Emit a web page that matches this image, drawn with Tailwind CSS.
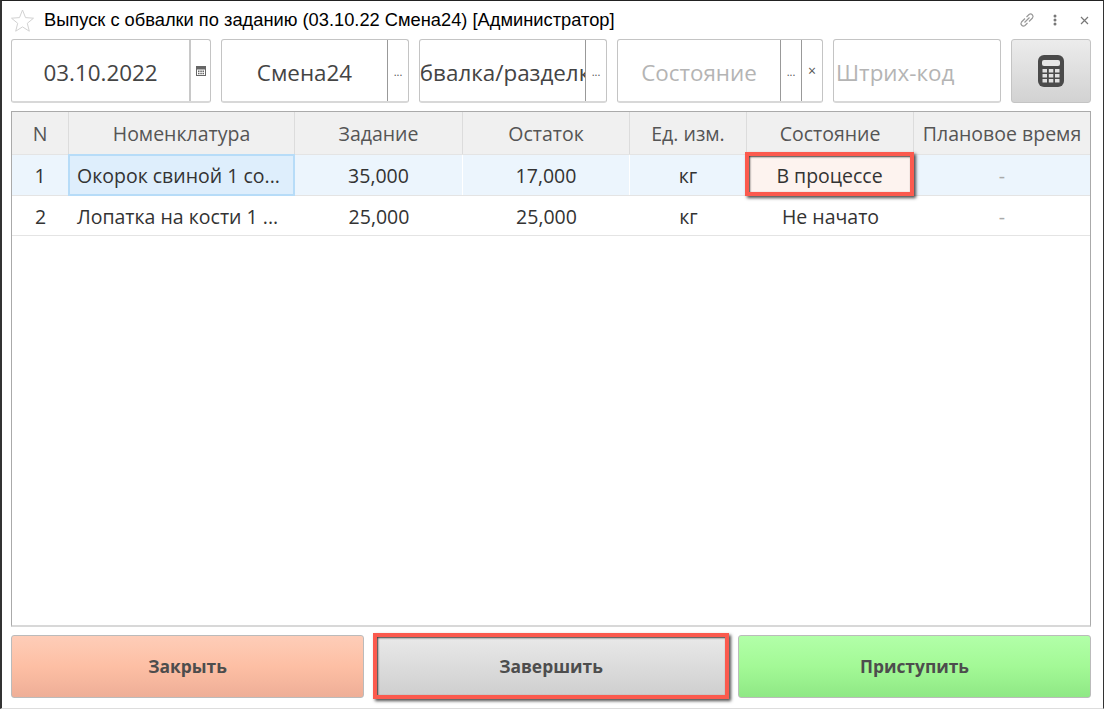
<!DOCTYPE html>
<html lang="ru">
<head>
  <meta charset="UTF-8" />
  <title>Выпуск с обвалки по заданию</title>
  <script src="https://cdn.jsdelivr.net/npm/@tailwindcss/browser@4"></script>
</head>
<body class="bg-white">
  <div class="w-[1104px] h-[709px] flex flex-col overflow-hidden bg-white border-l-2 border-t border-r border-b border-l-[#333] border-t-[#222] border-r-[#333] border-b-[#ddd] font-['Open_Sans',sans-serif] text-[#333]">

    <!-- Title -->
    <header class="h-[38px] shrink-0 flex items-center pl-[8px] pr-[14px]">
      <svg class="w-[25px] h-[25px] mr-[9px]" viewBox="0 0 25 25" fill="none" stroke="#d2d2d2" stroke-width="1"><path d="M12.5 2l3 7.6 8 .6-6.2 5.1 2 7.900-6.800-4.300-6.800 4.300 2-7.900L1.500 10.200l8-.6z"/></svg>
      <span class="font-['Liberation_Sans',sans-serif] text-[18.3px] text-black">Выпуск с обвалки по заданию (03.10.22 Смена24) [Администратор]</span>
      <div class="ml-auto flex items-center">
        <svg class="w-[16px] h-[16px]" viewBox="0 0 16 16" fill="none" stroke="#999" stroke-width="1.200"><path d="M5.500 10.500l5-5M6 6.500L2.500 10a2.500 2.500 0 0 0 3.500 3.500L8.500 11M10 9.500L13.500 6A2.500 2.500 0 0 0 10 2.500L7.500 5"/></svg>
        <svg class="w-[4px] h-[12px] ml-[18px]" viewBox="0 0 4 12" fill="#777"><circle cx="2" cy="2" r="1.500"/><circle cx="2" cy="6" r="1.500"/><circle cx="2" cy="10" r="1.500"/></svg>
        <svg class="w-[9px] h-[9px] ml-[23px]" viewBox="0 0 9 9" stroke="#777" stroke-width="1.200"><path d="M1 1l7 7M8 1l-7 7"/></svg>
      </div>
    </header>

    <!-- Filters -->
    <div class="h-[64px] shrink-0 flex gap-[10px] pl-[9px]">
      <div class="w-[200px] flex border border-[#c4c4c4] border-b-2 border-b-[#d8d8d8] rounded-[3px] text-[22.4px]">
        <div class="flex-1 flex items-center justify-center pt-[5px] text-[#444]">03.10.2022</div>
        <div class="w-[21px] flex items-center justify-center border-l-2 border-[#c8c8c8]">
          <svg class="w-[10px] h-[10px]" viewBox="0 0 10 10" fill="#666"><path d="M0 0h10v10H0z"/><path fill="#fff" d="M1 3.500h8V9H1z"/><path d="M2 4.500h1.500V6H2zM4.300 4.500h1.500V6H4.300zM6.500 4.500H8V6H6.500zM2 6.800h1.500v1.500H2zM4.300 6.800h1.500v1.500H4.300zM6.500 6.800H8v1.500H6.500z"/></svg>
        </div>
      </div>
      <div class="w-[188px] flex border border-[#c4c4c4] border-b-2 border-b-[#d8d8d8] rounded-[3px] text-[22.4px]">
        <div class="flex-1 flex items-center justify-center pt-[5px] text-[#444]">Смена24</div>
        <div class="w-[21px] flex items-center justify-center pt-[3px] border-l border-[#999] text-[11px] text-[#555]">...</div>
      </div>
      <div class="w-[188px] flex border border-[#c4c4c4] border-b-2 border-b-[#d8d8d8] rounded-[3px] text-[22.4px]">
        <div class="flex-1 min-w-0 overflow-hidden flex items-center justify-center whitespace-nowrap pt-[5px] pl-[4px] text-[#444]">обвалка/разделка</div>
        <div class="w-[21px] shrink-0 flex items-center justify-center pt-[3px] border-l border-[#999] text-[11px] text-[#555]">...</div>
      </div>
      <div class="w-[206px] flex border border-[#c4c4c4] border-b-2 border-b-[#d8d8d8] rounded-[3px] text-[22.4px]">
        <div class="flex-1 flex items-center justify-center pt-[5px] text-[#b4b4b4]">Состояние</div>
        <div class="w-[21px] flex items-center justify-center pt-[3px] border-l border-[#999] text-[11px] text-[#555]">...</div>
        <div class="w-[21px] flex items-center justify-center border-l border-[#999] text-[14px] text-[#555]">×</div>
      </div>
      <div class="w-[168px] flex items-center pl-[2px] pt-[5px] border border-[#c4c4c4] border-b-2 border-b-[#d8d8d8] rounded-[3px] text-[22.4px] text-[#b4b4b4]">Штрих-код</div>
      <button class="w-[80px] flex items-center justify-center border border-[#c4c4c4] rounded-[3px] bg-gradient-to-b from-[#ececec] to-[#d2d2d2]">
        <svg class="w-[26px] h-[32px]" viewBox="0 0 26 32"><rect width="26" height="32" rx="6" fill="#4a4a4a"/><rect x="4" y="5" width="18" height="6" rx="2" fill="#e6e6e6"/><path fill="#e0e0e0" d="M4.500 14h4.500v3.500H4.500zM10.800 14h4.500v3.500h-4.500zM17 14h4.500v3.500H17zM4.500 19h4.500v3.500H4.500zM10.800 19h4.500v3.500h-4.500zM17 19h4.500v3.500H17zM4.500 24h4.500v3.500H4.500zM10.800 24h4.500v3.500h-4.500zM17 24h4.500v3.500H17z"/></svg>
      </button>
    </div>

    <!-- Table -->
    <div class="ml-[9px] mt-[8px] w-[1080px] h-[516px] shrink-0 border border-[#aaa] border-b-2 border-b-[#d8d8d8] text-[19.5px]">
      <div class="grid grid-cols-[57px_226px_168px_167px_117px_167px_176px] h-[43px] bg-[#f0f0f0] border-b border-[#e4e4e4] text-[#555] text-center items-center">
        <div class="h-full flex items-center justify-center pt-[2px] border-r border-[#dcdcdc]">N</div>
        <div class="h-full flex items-center justify-center pt-[2px] border-r border-[#dcdcdc]">Номенклатура</div>
        <div class="h-full flex items-center justify-center pt-[2px] border-r border-[#dcdcdc]">Задание</div>
        <div class="h-full flex items-center justify-center pt-[2px] border-r border-[#dcdcdc]">Остаток</div>
        <div class="h-full flex items-center justify-center pt-[2px] border-r border-[#dcdcdc]">Ед. изм.</div>
        <div class="h-full flex items-center justify-center pt-[2px] border-r border-[#dcdcdc]">Состояние</div>
        <div class="h-full flex items-center justify-center pt-[2px] whitespace-nowrap">Плановое время</div>
      </div>
      <div class="grid grid-cols-[57px_226px_168px_167px_117px_167px_176px] h-[41px] bg-[#ecf5fd] border-b border-[#e4e4e4] text-center">
        <div class="flex items-center justify-center pt-[1px] border-r border-white">1</div>
        <div class="relative z-10 -ml-px -mt-px -mb-px flex items-center pl-[7px] pt-[1px] border-2 border-[#b7dcf8] bg-[#deeefc] whitespace-nowrap">Окорок свиной 1 со...</div>
        <div class="flex items-center justify-center pt-[1px] border-r border-white">35,000</div>
        <div class="flex items-center justify-center pt-[1px] border-r border-white">17,000</div>
        <div class="flex items-center justify-center pt-[1px] border-r border-white">кг</div>
        <div class="relative z-10 -mt-[3px] -mb-px -ml-[2px] flex items-center justify-center pt-[4px] border-[4px] border-[#fb5a4e] bg-[#fdf3ef] shadow-[2px_2px_3px_rgba(0,0,0,0.7),inset_1px_1px_2px_rgba(0,0,0,0.75)]">В процессе</div>
        <div class="flex items-center justify-center pt-[1px] text-[#aaa]">-</div>
      </div>
      <div class="grid grid-cols-[57px_226px_168px_167px_117px_167px_176px] h-[40px] border-b border-[#e4e4e4] text-center">
        <div class="flex items-center justify-center pt-[2px]">2</div>
        <div class="flex items-center pl-[8px] pt-[2px] whitespace-nowrap">Лопатка на кости 1 ...</div>
        <div class="flex items-center justify-center pt-[2px]">25,000</div>
        <div class="flex items-center justify-center pt-[2px]">25,000</div>
        <div class="flex items-center justify-center pt-[2px]">кг</div>
        <div class="flex items-center justify-center pt-[2px]">Не начато</div>
        <div class="flex items-center justify-center pt-[2px] text-[#aaa]">-</div>
      </div>
    </div>

    <!-- Actions -->
    <div class="ml-[9px] mt-[7px] w-[1080px] h-[64px] flex justify-between items-center text-[17.4px] font-bold text-[#4d4d4d]">
      <button class="w-[353px] h-[63px] border border-[#bbb] rounded-[3px] bg-gradient-to-b from-[#fecdb8] via-[#fdbfa4] to-[#eeae97]">Закрыть</button>
      <button class="w-[356px] h-[66px] border-[4px] border-[#fb5a4e] bg-gradient-to-b from-[#e9e9e9] to-[#cfcfcf] shadow-[2px_2px_3px_rgba(0,0,0,0.7),inset_1px_1px_2px_rgba(0,0,0,0.75)]">Завершить</button>
      <button class="w-[353px] h-[63px] border border-[#bbb] rounded-[3px] bg-gradient-to-b from-[#b2ffa8] via-[#a3f996] to-[#8fe885]">Приступить</button>
    </div>
  </div>
</body>
</html>
